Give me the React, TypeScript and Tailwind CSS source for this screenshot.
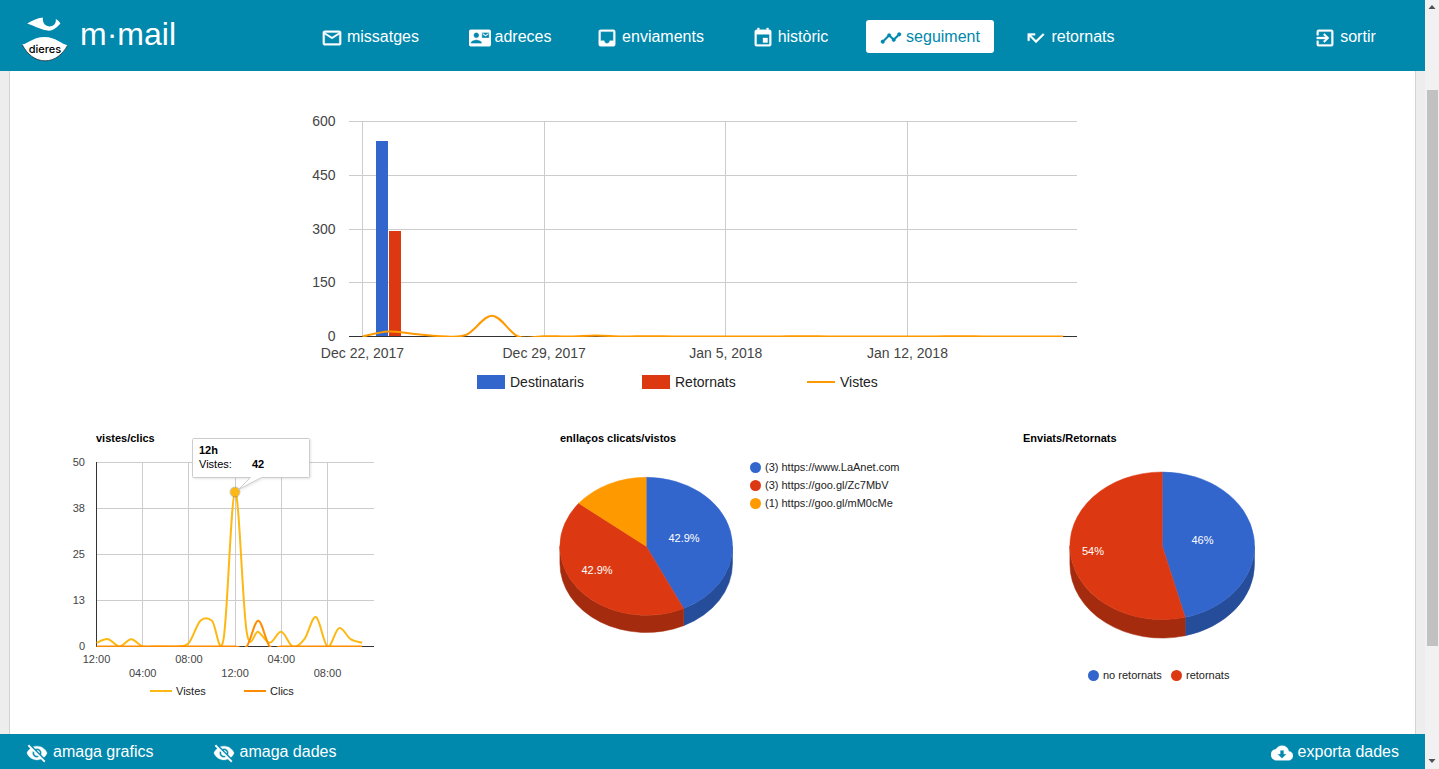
import React from "react";
import {
  MdMailOutline,
  MdContactMail,
  MdInbox,
  MdEvent,
  MdTimeline,
  MdCallMissed,
  MdExitToApp,
  MdVisibilityOff,
  MdCloudDownload,
} from "react-icons/md";
import type { IconType } from "react-icons";

type Point = [number, number];

const BLUE = "#3366cc";
const RED = "#dc3912";
const ORANGE = "#ff9900";
const AMBER = "#fdb813";
const DARK_ORANGE = "#ff8c00";

const NAV: { label: string; icon: IconType; active?: boolean }[] = [
  { label: "missatges", icon: MdMailOutline },
  { label: "adreces", icon: MdContactMail },
  { label: "enviaments", icon: MdInbox },
  { label: "històric", icon: MdEvent },
  { label: "seguiment", icon: MdTimeline, active: true },
  { label: "retornats", icon: MdCallMissed },
];

function smoothPath(points: Point[], tension = 0.17): string {
  return points
    .map(([x, y], i) => {
      if (i === 0) return `M${x},${y}`;
      const a = points[Math.max(0, i - 2)];
      const b = points[i - 1];
      const d = points[Math.min(points.length - 1, i + 1)];
      const c1 = [b[0] + (x - a[0]) * tension, b[1] + (y - a[1]) * tension];
      const c2 = [x - (d[0] - b[0]) * tension, y - (d[1] - b[1]) * tension];
      return `C${c1[0]},${c1[1]} ${c2[0]},${c2[1]} ${x},${y}`;
    })
    .join(" ");
}

function Logo() {
  return (
    <svg width="46" height="68" viewBox="0 0 46 68" role="img" aria-label="dieres">
      <path
        d="M5.2 23.6C10 20.6 15 18.4 20.8 17.6C20.6 22.4 22.6 26.4 27.2 26.4C31.6 26.4 34.4 23.6 33.8 19C36 20.2 37.4 21.8 38.4 23.6C35.6 27 31.4 30.6 27 30.7C19.5 30.5 12.5 25.8 5.2 23.6Z"
        fill="#fff"
      />
      <path
        d="M0.2 44.6C6 43.6 11 37 22.5 36.9C34 37 39 43.8 45.6 45.2C41 54 33 60.8 23 60.8C13 60.8 5 54 0.2 44.6Z"
        fill="#fff"
      />
      <path d="M0.4 45C5 54 13 60.8 23 60.8C33 60.8 41 54 45.4 45.4" fill="none" stroke="#222" strokeWidth="0.7" />
      <text x="23" y="53" textAnchor="middle" className="fill-black font-[Inter] text-[11px] font-medium">
        dieres
      </text>
    </svg>
  );
}

function BarIcon({ icon: Icon }: { icon: IconType }) {
  return <Icon size={22} strokeWidth="0.4" className="mt-0.5 [&>path[fill=none]]:stroke-none" />;
}

function NavLink({ label, icon, active }: { label: string; icon: IconType; active?: boolean }) {
  return (
    <li className="flex w-[140px] justify-center">
      <a
        href="#"
        aria-current={active ? "page" : undefined}
        className={
          active
            ? "flex h-[33px] items-center gap-1 rounded-[3px] bg-white px-3.5 text-[#0088ad]"
            : "flex h-[33px] items-center gap-1 rounded-[3px] px-3.5 text-white"
        }
      >
        <BarIcon icon={icon} />
        {label}
      </a>
    </li>
  );
}

function Header() {
  return (
    <header className="flex h-[71px] shrink-0 items-start bg-[#0088ad] pr-2.5">
      <a href="#" className="flex w-[300px] items-center gap-3 pl-[22px] text-white">
        <Logo />
        <span className="text-[32px] leading-8">m·mail</span>
      </a>
      <nav className="flex flex-1 pt-5">
        <ul className="flex flex-1">
          {NAV.map((item) => (
            <NavLink key={item.label} {...item} />
          ))}
        </ul>
        <ul>
          <NavLink label="sortir" icon={MdExitToApp} />
        </ul>
      </nav>
    </header>
  );
}

function TimelineChart() {
  const left = 89;
  const right = 817;
  const top = 50.5;
  const bottom = 265.5;
  const day = (n: number) => 102.5 + n * 25.95;
  const value = (v: number) => bottom - (v / 600) * (bottom - top);
  const views = [0, 14, 7, 1, 5, 58, 0, 1, 0, 3, 0, 1, 0, 0, 0, 0, 0, 1, 0, 0, 0, 0, 0, 1, 0, 0, 0, 0];
  const weeks = ["Dec 22, 2017", "Dec 29, 2017", "Jan 5, 2018", "Jan 12, 2018"];

  return (
    <svg width="905" height="346" viewBox="0 0 905 346" className="mx-auto text-sm" role="img" aria-label="Enviaments">
      {[150, 300, 450, 600].map((v) => (
        <rect key={v} x={left} y={Math.floor(value(v))} width={right - left} height="1" fill="#ccc" />
      ))}
      {weeks.map((w, i) => (
        <rect key={w} x={Math.floor(day(i * 7))} y={top - 0.5} width="1" height={bottom - top} fill="#ccc" />
      ))}
      <rect x="116" y="70" width="12" height="195" fill={BLUE} />
      <rect x="129" y="160" width="12" height="105" fill={RED} />
      <rect x={left} y="265" width={right - left} height="1" fill="#333" />
      <clipPath id="timeline-plot">
        <rect x={left} y={top} width={right - left} height={bottom - top + 0.5} />
      </clipPath>
      <path
        d={smoothPath(views.map((v, i) => [day(i), value(v)]))}
        fill="none"
        stroke={ORANGE}
        strokeWidth="2"
        clipPath="url(#timeline-plot)"
      />
      {[0, 150, 300, 450, 600].map((v, i) => (
        <text key={v} x="75.5" y={270 - i * 53.75} textAnchor="end" fill="#444">
          {v}
        </text>
      ))}
      {weeks.map((w, i) => (
        <text key={w} x={day(i * 7)} y="287" textAnchor="middle" fill="#444">
          {w}
        </text>
      ))}
      <rect x="217" y="304" width="28" height="14" fill={BLUE} />
      <text x="250" y="316" fill="#222">Destinataris</text>
      <rect x="382" y="304" width="28" height="14" fill={RED} />
      <text x="415" y="316" fill="#222">Retornats</text>
      <rect x="547" y="310" width="28" height="2" fill={ORANGE} />
      <text x="580" y="316" fill="#222">Vistes</text>
    </svg>
  );
}

function HourlyChart() {
  const left = 78;
  const right = 356;
  const top = 45.5;
  const bottom = 229.5;
  const hour = (n: number) => 78.5 + n * 11.55;
  const value = (v: number) => bottom - (v / 50) * (bottom - top);
  const views = [1, 2, 0, 2, 0, 0, 0, 0, 1, 7, 7, 2, 42, 4, 4, 1, 4, 0, 2, 8, 0, 5, 2, 1];
  const clicks = views.map((_, i) => (i === 14 ? 7 : 0));
  const ticks = ["12:00", "04:00", "08:00", "12:00", "04:00", "08:00"];

  return (
    <svg width="463" height="317" viewBox="0 0 463 317" className="text-[11px]" role="img" aria-label="vistes/clics">
      <text x="78" y="25" className="font-bold">vistes/clics</text>
      {[45, 91, 137, 183].map((y) => (
        <rect key={y} x={left} y={y} width={right - left} height="1" fill="#ccc" />
      ))}
      {ticks.map((_, i) => (
        <rect key={i} x={Math.floor(hour(i * 4))} y="45" width="1" height="184" fill="#ccc" />
      ))}
      <rect x={left} y="45" width="1" height="185" fill="#333" />
      <rect x={left} y="229" width={right - left} height="1" fill="#333" />
      <clipPath id="hourly-plot">
        <rect x={left} y={top} width={right - left} height={bottom - top + 0.5} />
      </clipPath>
      <g fill="none" strokeWidth="2" clipPath="url(#hourly-plot)">
        <path d={smoothPath(views.map((v, i) => [hour(i), value(v)]))} stroke={AMBER} />
        <path d={smoothPath(clicks.map((v, i) => [hour(i), value(v)]))} stroke={DARK_ORANGE} />
      </g>
      {["50", "38", "25", "13", "0"].map((label, i) => (
        <text key={label} x="67" y={49 + i * 46} textAnchor="end" fill="#444">
          {label}
        </text>
      ))}
      {ticks.map((label, i) => (
        <text key={i} x={hour(i * 4)} y={i % 2 ? 260 : 246} textAnchor="middle" fill="#444">
          {label}
        </text>
      ))}
      <circle cx="217" cy="75" r="5.5" fill="#000" fillOpacity="0.2" />
      <circle cx="217" cy="75" r="4.5" fill={AMBER} />
      <path
        d="M175.5 21.5H290.5a1 1 0 0 1 1 1V59.5a1 1 0 0 1-1 1H243.5L220.5 72.5L232.5 60.5H175.5a1 1 0 0 1-1-1V22.5a1 1 0 0 1 1-1Z"
        fill="#fff"
        stroke="#ccc"
        className="drop-shadow-[1px_1px_1px_rgba(0,0,0,0.1)]"
      />
      <text x="181" y="37" className="font-bold">12h</text>
      <text x="181" y="51">Vistes:</text>
      <text x="234" y="51" className="font-bold">42</text>
      <rect x="132" y="273" width="22" height="2" fill={AMBER} />
      <text x="158" y="278" fill="#222">Vistes</text>
      <rect x="226" y="273" width="22" height="2" fill={DARK_ORANGE} />
      <text x="252" y="278" fill="#222">Clics</text>
    </svg>
  );
}

interface Slice {
  share: number;
  color: string;
  side: string;
  label?: string;
  labelAt?: Point;
}

function Pie({ cx, cy, rx, ry, depth, slices }: { cx: number; cy: number; rx: number; ry: number; depth: number; slices: Slice[] }) {
  const at = (t: number): Point => [cx + rx * Math.sin(2 * Math.PI * t), cy - ry * Math.cos(2 * Math.PI * t)];
  const spans = slices.map((slice, i) => {
    const start = slices.slice(0, i).reduce((sum, s) => sum + s.share, 0);
    return { ...slice, start, end: start + slice.share };
  });

  return (
    <g>
      {spans.map(({ start, end, side }, i) => {
        const from = Math.max(start, 0.25);
        const to = Math.min(end, 0.75);
        if (from >= to) return null;
        const [ax, ay] = at(from);
        const [bx, by] = at(to);
        return (
          <path
            key={i}
            d={`M${ax},${ay}A${rx},${ry} 0 0 1 ${bx},${by}V${by + depth}A${rx},${ry} 0 0 0 ${ax},${ay + depth}Z`}
            fill={side}
            stroke={side}
            strokeWidth="0.5"
          />
        );
      })}
      {spans.map(({ start, end, color }, i) => {
        const [ax, ay] = at(start);
        const [bx, by] = at(end);
        const large = end - start > 0.5 ? 1 : 0;
        return (
          <path
            key={i}
            d={`M${cx},${cy}L${ax},${ay}A${rx},${ry} 0 ${large} 1 ${bx},${by}Z`}
            fill={color}
            stroke={color}
            strokeWidth="0.5"
          />
        );
      })}
      {spans.map(({ label, labelAt }, i) =>
        label && labelAt ? (
          <text key={i} x={labelAt[0]} y={labelAt[1]} textAnchor="middle" fill="#fff">
            {label}
          </text>
        ) : null,
      )}
    </g>
  );
}

function LinksChart() {
  const legend = [
    { color: BLUE, text: "(3) https://www.LaAnet.com" },
    { color: RED, text: "(3) https://goo.gl/Zc7MbV" },
    { color: ORANGE, text: "(1) https://goo.gl/mM0cMe" },
  ];
  return (
    <svg width="463" height="317" viewBox="0 0 463 317" className="text-[11px]" role="img" aria-label="enllaços clicats/vistos">
      <text x="79" y="25" className="font-bold">enllaços clicats/vistos</text>
      <Pie
        cx={165.2}
        cy={129.3}
        rx={86.3}
        ry={69}
        depth={17.2}
        slices={[
          { share: 3 / 7, color: BLUE, side: "#264d99", label: "42.9%", labelAt: [203, 125] },
          { share: 3 / 7, color: RED, side: "#a52b0e", label: "42.9%", labelAt: [116, 157] },
          { share: 1 / 7, color: ORANGE, side: "#bf7300" },
        ]}
      />
      {legend.map(({ color, text }, i) => (
        <g key={text}>
          <circle cx="274.5" cy={50.5 + i * 18} r="5.5" fill={color} />
          <text x="284" y={54 + i * 18} fill="#222">{text}</text>
        </g>
      ))}
    </svg>
  );
}

function BouncesChart() {
  return (
    <svg width="463" height="317" viewBox="0 0 463 317" className="text-[11px]" role="img" aria-label="Enviats/Retornats">
      <text x="79" y="25" className="font-bold">Enviats/Retornats</text>
      <Pie
        cx={218.2}
        cy={128.8}
        rx={92.3}
        ry={73.8}
        depth={18.5}
        slices={[
          { share: 0.46, color: BLUE, side: "#264d99", label: "46%", labelAt: [258.5, 127] },
          { share: 0.54, color: RED, side: "#a52b0e", label: "54%", labelAt: [149, 138] },
        ]}
      />
      <circle cx="149.5" cy="258.5" r="5.5" fill={BLUE} />
      <text x="159" y="262" fill="#222">no retornats</text>
      <circle cx="232.5" cy="258.5" r="5.5" fill={RED} />
      <text x="242" y="262" fill="#222">retornats</text>
    </svg>
  );
}

function FooterButton({ label, icon }: { label: string; icon: IconType }) {
  return (
    <button type="button" className="flex items-center gap-[5px]">
      <BarIcon icon={icon} />
      {label}
    </button>
  );
}

function Footer() {
  return (
    <footer className="flex h-[35px] shrink-0 items-center gap-[59px] bg-[#0088ad] px-[26px] text-white">
      <FooterButton label="amaga grafics" icon={MdVisibilityOff} />
      <FooterButton label="amaga dades" icon={MdVisibilityOff} />
      <div className="ml-auto">
        <FooterButton label="exporta dades" icon={MdCloudDownload} />
      </div>
    </footer>
  );
}

function ScrollBar() {
  return (
    <div aria-hidden="true" className="flex w-3.5 shrink-0 flex-col items-center bg-[#f1f1f1]">
      <svg width="14" height="14" viewBox="0 0 14 14" fill="#505050">
        <path d="M3.5 9H10.5L7 5Z" />
      </svg>
      <div className="flex w-full flex-1 flex-col pr-px pl-0.5">
        <div className="grow-[76]" />
        <div className="grow-[556] bg-[#c1c1c1]" />
        <div className="grow-[109]" />
      </div>
      <svg width="14" height="14" viewBox="0 0 14 14" fill="#505050">
        <path d="M3.5 4H10.5L7 8Z" />
      </svg>
    </div>
  );
}

export default function App() {
  return (
    <div className="flex h-screen overflow-hidden font-['Liberation_Sans',Arial,sans-serif] text-base">
      <div className="flex min-w-0 flex-1 flex-col bg-[#ededed]">
        <Header />
        <main className="mx-[9px] min-h-0 flex-1 overflow-hidden border-x border-[#d3d3d3] bg-white">
          <TimelineChart />
          <div className="grid grid-cols-3 px-2">
            <HourlyChart />
            <LinksChart />
            <BouncesChart />
          </div>
        </main>
        <Footer />
      </div>
      <ScrollBar />
    </div>
  );
}
